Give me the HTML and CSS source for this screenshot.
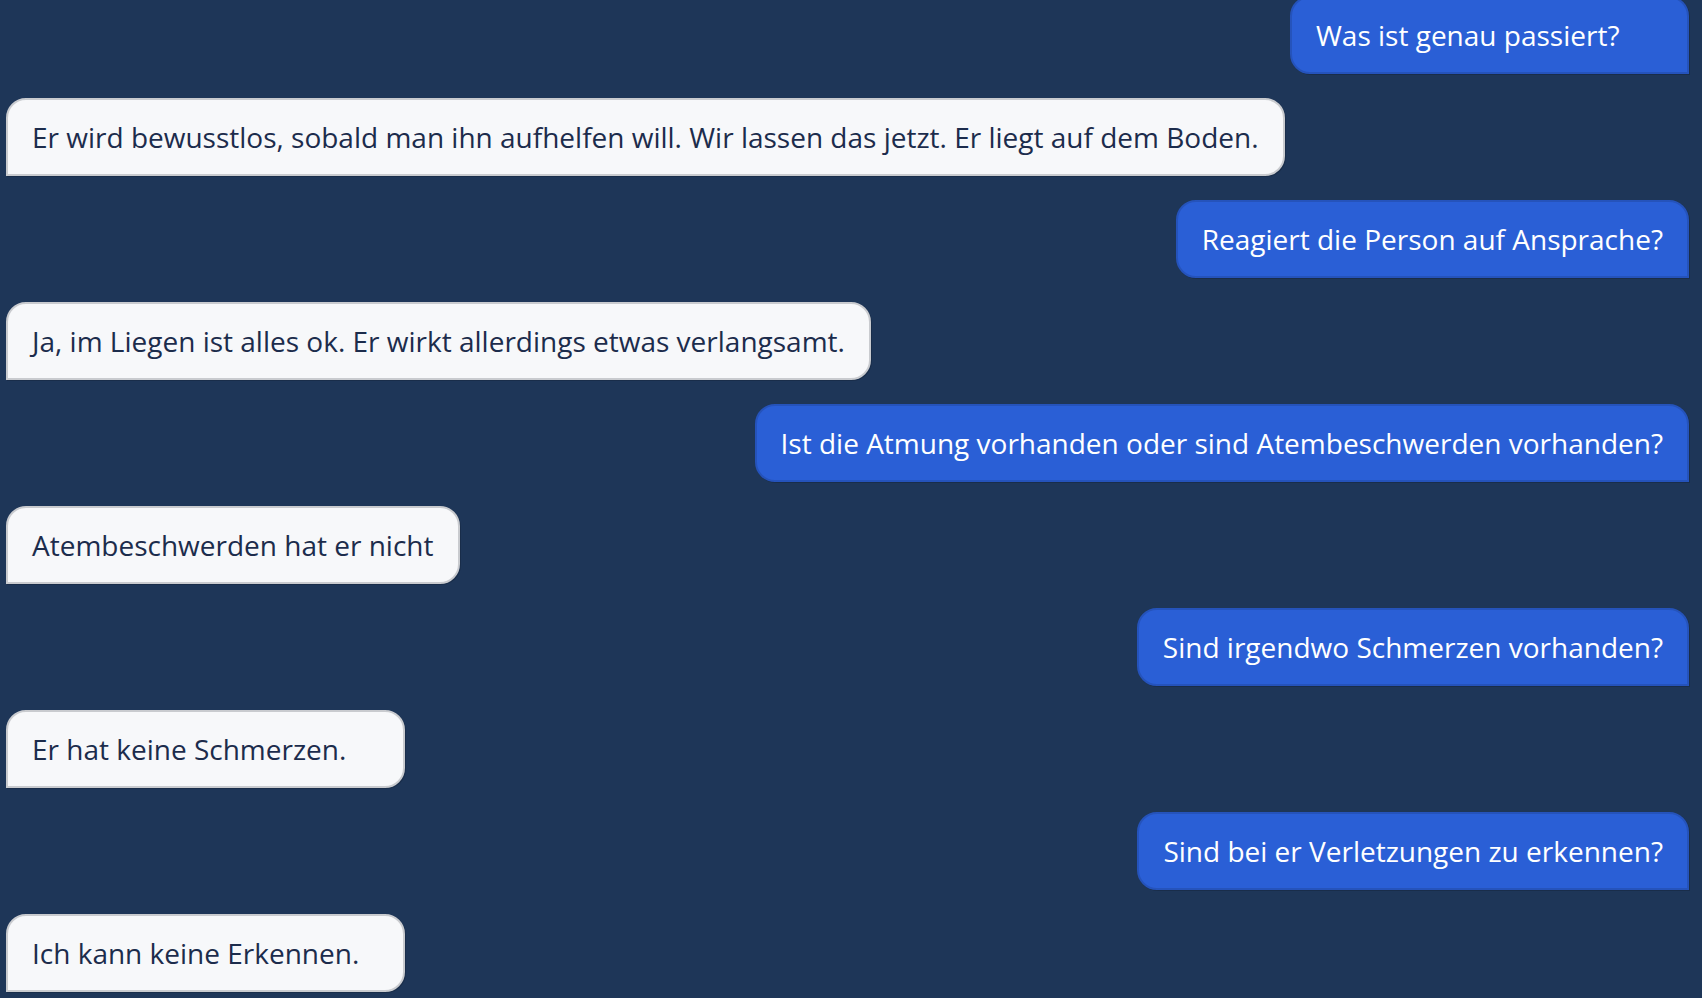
FILE: index.html
```html
<!DOCTYPE html>
<html lang="de">
<head>
<meta charset="utf-8">
<title>Chat</title>
<link rel="stylesheet" href="styles.css">
</head>
<body>
<div class="chat">
  <div class="msg out first">Was ist genau passiert?</div>
  <div class="msg in">Er wird bewusstlos, sobald man ihn aufhelfen will. Wir lassen das jetzt. Er liegt auf dem Boden.</div>
  <div class="msg out">Reagiert die Person auf Ansprache?</div>
  <div class="msg in">Ja, im Liegen ist alles ok. Er wirkt allerdings etwas verlangsamt.</div>
  <div class="msg out">Ist die Atmung vorhanden oder sind Atembeschwerden vorhanden?</div>
  <div class="msg in">Atembeschwerden hat er nicht</div>
  <div class="msg out">Sind irgendwo Schmerzen vorhanden?</div>
  <div class="msg in">Er hat keine Schmerzen.</div>
  <div class="msg out">Sind bei er Verletzungen zu erkennen?</div>
  <div class="msg in">Ich kann keine Erkennen.</div>
</div>
</body>
</html>
```

FILE: styles.css
```css
html, body {
  margin: 0;
  height: 100%;
}
body {
  background: #1e3658;
  font-family: "Open Sans", "Noto Sans", sans-serif;
  overflow: hidden;
}
.chat {
  display: flex;
  flex-direction: column;
  gap: 24px;
  padding: 0 13px 0 6px;
}
.msg {
  box-sizing: border-box;
  min-width: 399px;
  max-width: 100%;
  padding: 17px 24px;
  font-size: 28px;
  line-height: 40px;
  border-radius: 20px;
  border: 2px solid;
}
.first {
  margin-top: -4px;
}
.in {
  align-self: flex-start;
  background: #f7f8fa;
  color: #1c2c4c;
  border-color: #c9cbcf;
  border-bottom-left-radius: 0;
  box-shadow: 1px 1px 0 rgba(0, 0, 0, 0.15);
}
.out {
  align-self: flex-end;
  background: #2a5fd6;
  color: #ffffff;
  border-color: #2553bb;
  border-bottom-right-radius: 0;
  box-shadow: 1px 1px 0 rgba(0, 0, 0, 0.15);
}
```
